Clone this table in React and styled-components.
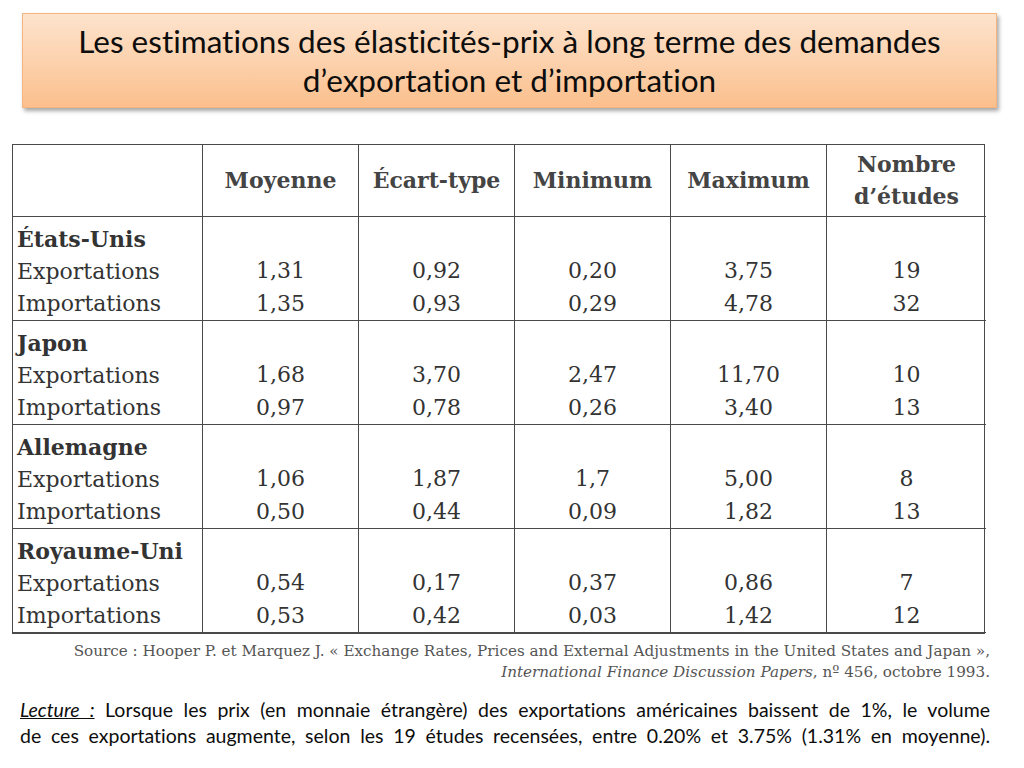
import styled, { createGlobalStyle } from "styled-components";

const GlobalStyle = createGlobalStyle`
    html, body {
        margin: 0;
        padding: 0;
        background: #ffffff;
    }
`;

const groups = [
    {
        country: "États-Unis",
        rows: [
            ["Exportations", "1,31", "0,92", "0,20", "3,75", "19"],
            ["Importations", "1,35", "0,93", "0,29", "4,78", "32"],
        ],
    },
    {
        country: "Japon",
        rows: [
            ["Exportations", "1,68", "3,70", "2,47", "11,70", "10"],
            ["Importations", "0,97", "0,78", "0,26", "3,40", "13"],
        ],
    },
    {
        country: "Allemagne",
        rows: [
            ["Exportations", "1,06", "1,87", "1,7", "5,00", "8"],
            ["Importations", "0,50", "0,44", "0,09", "1,82", "13"],
        ],
    },
    {
        country: "Royaume-Uni",
        rows: [
            ["Exportations", "0,54", "0,17", "0,37", "0,86", "7"],
            ["Importations", "0,53", "0,42", "0,03", "1,42", "12"],
        ],
    },
];

const headers = ["Moyenne", "Écart-type", "Minimum", "Maximum", "Nombre\nd’études"];

const App = () => {
    return (
        <>
            <GlobalStyle />
            <Slide>
                <TitleBox>
                    <h1>
                        Les estimations des élasticités-prix à long terme des demandes
                        <br />
                        d’exportation et d’importation
                    </h1>
                </TitleBox>

                <Table>
                    <HeadCell />
                    {headers.map((h, i) => (
                        <HeadCell key={i} $last={i === headers.length - 1}>{h}</HeadCell>
                    ))}

                    {groups.map((group, g) => (
                        <Group key={g}>
                            <LabelCell>
                                <strong>{group.country}</strong>
                                {group.rows.map((r, i) => <span key={i}>{r[0]}</span>)}
                            </LabelCell>
                            {[1, 2, 3, 4, 5].map((col) => (
                                <ValueCell key={col} $last={col === 5}>
                                    {group.rows.map((r, i) => <span key={i}>{r[col]}</span>)}
                                </ValueCell>
                            ))}
                        </Group>
                    ))}
                </Table>

                <Source>
                    <p>Source : Hooper P. et Marquez J. « Exchange Rates, Prices and External Adjustments in the United States and Japan »,</p>
                    <p><em>International Finance Discussion Papers</em>, nº 456, octobre 1993.</p>
                </Source>

                <Lecture>
                    <Line><Label>Lecture :</Label> Lorsque les prix (en monnaie étrangère) des exportations américaines baissent de 1%, le volume</Line>
                    <Line>de ces exportations augmente, selon les 19 études recensées, entre 0.20% et 3.75% (1.31% en moyenne).</Line>
                </Lecture>
            </Slide>
        </>
    );
};

export default App;

const Slide = styled.div`
    width: 1024px;
    height: 768px;
    box-sizing: border-box;
    padding: 13px 0 0;
    overflow: hidden;
    background: #ffffff;
`;

const TitleBox = styled.div`
    margin: 0 27px 0 22px;
    height: 95px;
    box-sizing: border-box;
    border: 1px solid #f6b47f;
    background: linear-gradient(to bottom, #fde3cd 0%, #fcd2ae 50%, #fbbf8c 100%);
    box-shadow: 2px 3px 4px rgba(0, 0, 0, 0.35);
    display: flex;
    align-items: center;
    justify-content: center;

    h1 {
        margin: 0;
        font-family: Lato, "Open Sans", sans-serif;
        font-variant-ligatures: none;
        font-weight: 400;
        font-size: 31.5px;
        line-height: 39px;
        color: #0d0d0d;
        text-align: center;
    }
`;

const Table = styled.div`
    margin: 36px 0 0 12px;
    width: 973px;
    display: grid;
    grid-template-columns: 190px 156px 156px 156px 156px 159px;
    border: 1.5px solid #4a4a4a;
    box-sizing: border-box;
    font-family: "DejaVu Serif", "Liberation Serif", serif;
    color: #333333;
`;

const HeadCell = styled.div`
    height: 72px;
    box-sizing: border-box;
    border-right: ${(p) => (p.$last ? "none" : "1.5px solid #4a4a4a")};
    border-bottom: 1.5px solid #4a4a4a;
    display: flex;
    align-items: center;
    justify-content: center;
    white-space: pre-line;
    text-align: center;
    font-size: 22px;
    font-weight: 600;
    line-height: 32px;
    padding-bottom: 1px;
    color: #444444;
`;

const Group = styled.div`
    display: contents;
`;

const LabelCell = styled.div`
    height: 104px;
    box-sizing: border-box;
    border-right: 1.5px solid #4a4a4a;
    border-bottom: 1.5px solid #4a4a4a;
    padding: 6px 0 0 4px;
    display: flex;
    flex-direction: column;
    font-size: 22px;
    line-height: 32.5px;
    white-space: nowrap;

    strong {
        font-weight: 700;
    }
`;

const ValueCell = styled.div`
    height: 104px;
    box-sizing: border-box;
    border-right: ${(p) => (p.$last ? "none" : "1.5px solid #4a4a4a")};
    border-bottom: 1.5px solid #4a4a4a;
    padding-top: 37px;
    display: flex;
    flex-direction: column;
    align-items: center;
    font-size: 22px;
    line-height: 33px;
`;

const Source = styled.div`
    margin: 7px 34px 0 0;
    font-family: "DejaVu Serif", "Liberation Serif", serif;
    font-size: 15.2px;
    line-height: 21px;
    color: #555555;
    text-align: right;

    p {
        margin: 0;
    }
`;

const Lecture = styled.div`
    margin: 14px 34px 0 20px;
    font-family: Lato, "Open Sans", sans-serif;
    font-variant-ligatures: none;
    font-size: 19.5px;
    line-height: 26px;
    color: #0d0d0d;
`;

const Line = styled.div`
    text-align: justify;
    text-align-last: justify;
    white-space: nowrap;
`;

const Label = styled.span`
    font-style: italic;
    text-decoration: underline;
`;
